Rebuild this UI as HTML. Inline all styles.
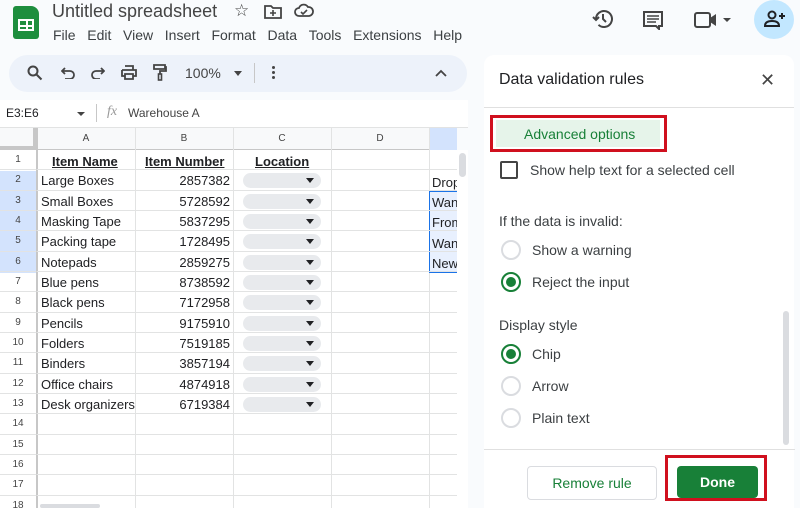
<!DOCTYPE html>
<html><head><style>
*{box-sizing:border-box;margin:0;padding:0}
body{width:800px;height:508px;overflow:hidden;background:#f9fbfd;font-family:"Liberation Sans",Arial,sans-serif;position:relative;color:#202124}
.a{position:absolute}
.t{font-size:13px}
.grid{position:absolute;left:0;top:128px;width:457px;height:380px;background:#fff;overflow:hidden}
.rh{position:absolute;left:0;width:37px;text-align:center;font-size:10px;color:#444;border-bottom:1px solid #e2e3e3;border-right:1px solid #c7c7c7}
.vl{position:absolute;top:0;height:380px;width:1px;background:#e2e3e3}
.hl{position:absolute;left:37px;width:420px;height:1px;background:#e2e3e3}
.cell{position:absolute;font-size:13px;white-space:nowrap}
.chip{position:absolute;left:243px;width:78px;height:15px;border-radius:8px;background:#e8eaed}
.chip:after{content:"";position:absolute;right:7px;top:5px;border-left:4px solid transparent;border-right:4px solid transparent;border-top:5px solid #202124}
.radio{position:absolute;left:501px;width:20px;height:20px;border-radius:50%;border:2px solid #dadce0}
.radio.on{border-color:#188038}
.radio.on:after{content:"";position:absolute;left:3px;top:3px;width:10px;height:10px;border-radius:50%;background:#188038}
.pl{position:absolute;left:532px;font-size:14px;color:#3c4043}
</style></head><body>
<!-- logo -->
<div class="a" style="left:13px;top:6px;width:26px;height:33px;background:#1e8e3e;border-radius:3px 8px 3px 3px"></div>
<div class="a" style="left:18px;top:19px;width:16px;height:12px;border:2px solid #fff;background:linear-gradient(#fff,#fff) 6px 0/2px 100% no-repeat,linear-gradient(#fff,#fff) 0 4px/100% 2px no-repeat"></div>
<div class="a" style="left:52px;top:1px;font-size:18px;color:#444">Untitled spreadsheet</div>
<div class="a" style="left:234px;top:1px;font-size:17px;color:#444">☆</div>
<svg class="a" style="left:264px;top:4px" width="18" height="16" viewBox="0 0 18 16"><path d="M1 2h6l2 2h8v10H1z" fill="none" stroke="#444" stroke-width="1.8"/><path d="M9 6v6M6 9h6" stroke="#444" stroke-width="1.6"/></svg>
<svg class="a" style="left:294px;top:3px" width="20" height="16" viewBox="0 0 20 16"><path d="M5 13a4 4 0 0 1 0-8 5 5 0 0 1 9-1 4.5 4.5 0 0 1 1 9z" fill="none" stroke="#444" stroke-width="1.8"/><path d="M7 9l2 2 4-4" fill="none" stroke="#444" stroke-width="1.6"/></svg>
<div class="a" style="left:53px;top:27px;font-size:14px;color:#3c4043;word-spacing:0">File&nbsp;&nbsp;&nbsp;Edit&nbsp;&nbsp;&nbsp;View&nbsp;&nbsp;&nbsp;Insert&nbsp;&nbsp;&nbsp;Format&nbsp;&nbsp;&nbsp;Data&nbsp;&nbsp;&nbsp;Tools&nbsp;&nbsp;&nbsp;Extensions&nbsp;&nbsp;&nbsp;Help</div>
<!-- right icons -->
<svg class="a" style="left:592px;top:8px" width="22" height="22" viewBox="0 0 22 22"><path d="M4 11a8 8 0 1 1 2.5 5.8" fill="none" stroke="#444" stroke-width="2"/><path d="M1 9l3 3 3-3" fill="none" stroke="#444" stroke-width="2"/><path d="M11 6v5l3 3" fill="none" stroke="#444" stroke-width="2"/></svg>
<svg class="a" style="left:642px;top:10px" width="22" height="20" viewBox="0 0 22 20"><path d="M2 2h18v14h-3v3l-3-3H2z" fill="none" stroke="#444" stroke-width="2"/><path d="M5 6h12M5 9h12M5 12h9" stroke="#444" stroke-width="1.5"/></svg>
<svg class="a" style="left:694px;top:11px" width="40" height="18" viewBox="0 0 40 18"><rect x="1" y="2" width="15" height="14" rx="2" fill="none" stroke="#444" stroke-width="2"/><path d="M16 7l6-4v12l-6-4z" fill="#444"/><path d="M29 7h8l-4 4z" fill="#444"/></svg>
<div class="a" style="left:754px;top:0;width:40px;height:39px;border-radius:50%;background:#c2e7ff"></div>
<svg class="a" style="left:764px;top:9px" width="22" height="20" viewBox="0 0 22 20"><circle cx="8" cy="6" r="3.5" fill="none" stroke="#202124" stroke-width="2"/><path d="M1 17c0-4 3-5 7-5s7 1 7 5z" fill="none" stroke="#202124" stroke-width="2"/><path d="M18 4v6M15 7h6" stroke="#202124" stroke-width="2"/></svg>
<!-- toolbar -->
<div class="a" style="left:9px;top:55px;width:458px;height:37px;border-radius:19px;background:#edf2fa"></div>
<svg class="a" style="left:27px;top:65px" width="16" height="16" viewBox="0 0 16 16"><circle cx="6" cy="6" r="4.5" fill="none" stroke="#444" stroke-width="2"/><path d="M9.5 9.5l5 5" stroke="#444" stroke-width="2"/></svg>
<svg class="a" style="left:61px;top:67px" width="14" height="12" viewBox="0 0 14 12"><path d="M4 1L1 4l3 3M1 4h8a4 4 0 0 1 0 8H4" fill="none" stroke="#444" stroke-width="1.8"/></svg>
<svg class="a" style="left:91px;top:67px" width="14" height="12" viewBox="0 0 14 12"><path d="M10 1l3 3-3 3M13 4H5a4 4 0 0 0 0 8h4" fill="none" stroke="#444" stroke-width="1.8"/></svg>
<svg class="a" style="left:121px;top:65px" width="16" height="15" viewBox="0 0 16 15"><path d="M4 1h8v4M1 5h14v6h-3M4 11H1V5M4 9h8v5H4z" fill="none" stroke="#444" stroke-width="1.8"/></svg>
<svg class="a" style="left:153px;top:64px" width="14" height="17" viewBox="0 0 14 17"><path d="M1 1h11v4H1zM12 3h1v4H7v3" fill="none" stroke="#444" stroke-width="1.8"/><rect x="5.5" y="10" width="3" height="6" fill="none" stroke="#444" stroke-width="1.6"/></svg>
<div class="a" style="left:185px;top:65px;font-size:14px;color:#444">100%</div>
<div class="a" style="left:234px;top:71px;border-left:4px solid transparent;border-right:4px solid transparent;border-top:5px solid #444"></div>
<div class="a" style="left:254px;top:63px;width:1px;height:20px;background:#c7c7c7"></div>
<div class="a" style="left:272px;top:66px;width:3px;height:3px;background:#444;border-radius:50%;box-shadow:0 5px 0 #444,0 10px 0 #444"></div>
<svg class="a" style="left:435px;top:69px" width="12" height="8" viewBox="0 0 12 8"><path d="M1 7l5-5 5 5" fill="none" stroke="#444" stroke-width="1.8"/></svg>
<!-- formula bar -->
<div class="a" style="left:0;top:100px;width:468px;height:28px;background:#fff;border-bottom:1px solid #e2e3e3"></div>
<div class="a t" style="left:6px;top:106px;font-size:12px">E3:E6</div>
<div class="a" style="left:77px;top:112px;border-left:4px solid transparent;border-right:4px solid transparent;border-top:4px solid #444"></div>
<div class="a" style="left:96px;top:104px;width:1px;height:18px;background:#c7c7c7"></div>
<div class="a" style="left:107px;top:104px;font-size:14px;font-style:italic;color:#999;font-family:'Liberation Serif',serif">fx</div>
<div class="a" style="left:128px;top:106px;font-size:12px;color:#444">Warehouse A</div>
<!-- grid -->
<div class="grid">
<div class="a" style="left:0;top:0;width:457px;height:22px;background:#f8f9fa;border-bottom:1px solid #c7c7c7"></div>
<div class="a" style="left:429px;top:0;width:28px;height:22px;background:#d3e3fd"></div>
<div class="a" style="left:0;top:0;width:37px;height:22px;border-right:4px solid #c7c7c7;border-bottom:4px solid #c7c7c7;background:#f8f9fa"></div>
<div class="a" style="left:37px;top:5px;width:98px;text-align:center;font-size:10px;color:#444">A</div>
<div class="a" style="left:135px;top:5px;width:98px;text-align:center;font-size:10px;color:#444">B</div>
<div class="a" style="left:233px;top:5px;width:98px;text-align:center;font-size:10px;color:#444">C</div>
<div class="a" style="left:331px;top:5px;width:98px;text-align:center;font-size:10px;color:#444">D</div>
<div class="vl" style="left:135px"></div><div class="vl" style="left:233px"></div><div class="vl" style="left:331px"></div><div class="vl" style="left:429px"></div>
<div class="a" style="left:37px;top:0;width:1px;height:380px;background:#c7c7c7"></div>
<div class="a" style="left:0;top:43px;width:37px;height:102px;background:#d3e3fd"></div>
<div class="a" style="left:429px;top:63px;width:28px;height:82px;background:#e8f0fe;border:1px solid #1a73e8;border-right:none"></div>
<div id="rows"></div>
<div class="cell" style="left:52px;top:26px;font-weight:bold;text-decoration:underline">Item Name</div>
<div class="cell" style="left:145px;top:26px;font-weight:bold;text-decoration:underline">Item Number</div>
<div class="cell" style="left:255px;top:26px;font-weight:bold;text-decoration:underline">Location</div>
<div class="cell" style="left:432px;top:47px">Drop</div>
<div class="cell" style="left:432px;top:67px">Wan</div>
<div class="cell" style="left:432px;top:87px">From</div>
<div class="cell" style="left:432px;top:108px">Wan</div>
<div class="cell" style="left:432px;top:128px">New</div>
</div>
<script>
(function(){
var names=["Large Boxes","Small Boxes","Masking Tape","Packing tape","Notepads","Blue pens","Black pens","Pencils","Folders","Binders","Office chairs","Desk organizers"];
var nums=["2857382","5728592","5837295","1728495","2859275","8738592","7172958","9175910","7519185","3857194","4874918","6719384"];
var h="";var rh=20.33;
for(var i=1;i<=18;i++){var y=22+(i-1)*rh;
h+='<div class="rh" style="top:'+y+'px;height:'+rh+'px;line-height:'+rh+'px">'+i+'</div>';
h+='<div class="hl" style="top:'+(y+rh-1)+'px"></div>';
if(i>=2&&i<=13){h+='<div class="cell" style="left:41px;top:'+(y+3)+'px">'+names[i-2]+'</div>';
h+='<div class="cell" style="left:135px;width:95px;text-align:right;top:'+(y+3)+'px">'+nums[i-2]+'</div>';
h+='<div class="chip" style="top:'+(y+3)+'px"></div>';}}
document.getElementById("rows").outerHTML=h;
})();
</script>
<div class="a" style="left:457px;top:150px;width:11px;height:358px;background:#fff"></div>
<div class="a" style="left:459px;top:153px;width:7px;height:24px;border-radius:4px;background:#dadce0"></div>
<div class="a" style="left:40px;top:504px;width:60px;height:4px;border-radius:3px;background:#dadce0"></div>
<!-- panel -->
<div class="a" style="left:484px;top:55px;width:310px;height:453px;background:#fff;border-radius:10px 10px 0 0"></div>
<div class="a" style="left:499px;top:71px;font-size:16px;color:#202124">Data validation rules</div>
<div class="a" style="left:760px;top:70px;font-size:18px;color:#444">✕</div>
<div class="a" style="left:484px;top:107px;width:310px;height:1px;background:#e0e0e0"></div>
<div class="a" style="left:490px;top:115px;width:177px;height:37px;border:3px solid #d0101e;background:#fff"></div>
<div class="a" style="left:496px;top:120px;width:164px;height:27px;background:#e6f4ea"></div>
<div class="a" style="left:524px;top:126px;font-size:14px;color:#188038">Advanced options</div>
<div class="a" style="left:500px;top:161px;width:18px;height:18px;border:2px solid #444;border-radius:2px"></div>
<div class="a" style="left:530px;top:162px;font-size:14px;color:#3c4043">Show help text for a selected cell</div>
<div class="a" style="left:499px;top:213px;font-size:14px;color:#3c4043">If the data is invalid:</div>
<div class="radio" style="top:240px"></div><div class="pl" style="top:242px">Show a warning</div>
<div class="radio on" style="top:272px"></div><div class="pl" style="top:274px">Reject the input</div>
<div class="a" style="left:499px;top:317px;font-size:14px;color:#3c4043">Display style</div>
<div class="radio on" style="top:344px"></div><div class="pl" style="top:346px">Chip</div>
<div class="radio" style="top:376px"></div><div class="pl" style="top:378px">Arrow</div>
<div class="radio" style="top:408px"></div><div class="pl" style="top:410px">Plain text</div>
<div class="a" style="left:783px;top:311px;width:6px;height:134px;border-radius:3px;background:#dadce0"></div>
<div class="a" style="left:484px;top:449px;width:311px;height:1px;background:#e0e0e0"></div>
<div class="a" style="left:527px;top:466px;width:130px;height:34px;border:1px solid #dadce0;border-radius:4px;text-align:center;line-height:32px;font-size:14px;color:#188038">Remove rule</div>
<div class="a" style="left:665px;top:455px;width:102px;height:46px;border:3px solid #d0101e"></div>
<div class="a" style="left:677px;top:466px;width:81px;height:32px;background:#188038;border-radius:4px;text-align:center;line-height:32px;font-size:14px;font-weight:bold;color:#fff">Done</div>
</body></html>
